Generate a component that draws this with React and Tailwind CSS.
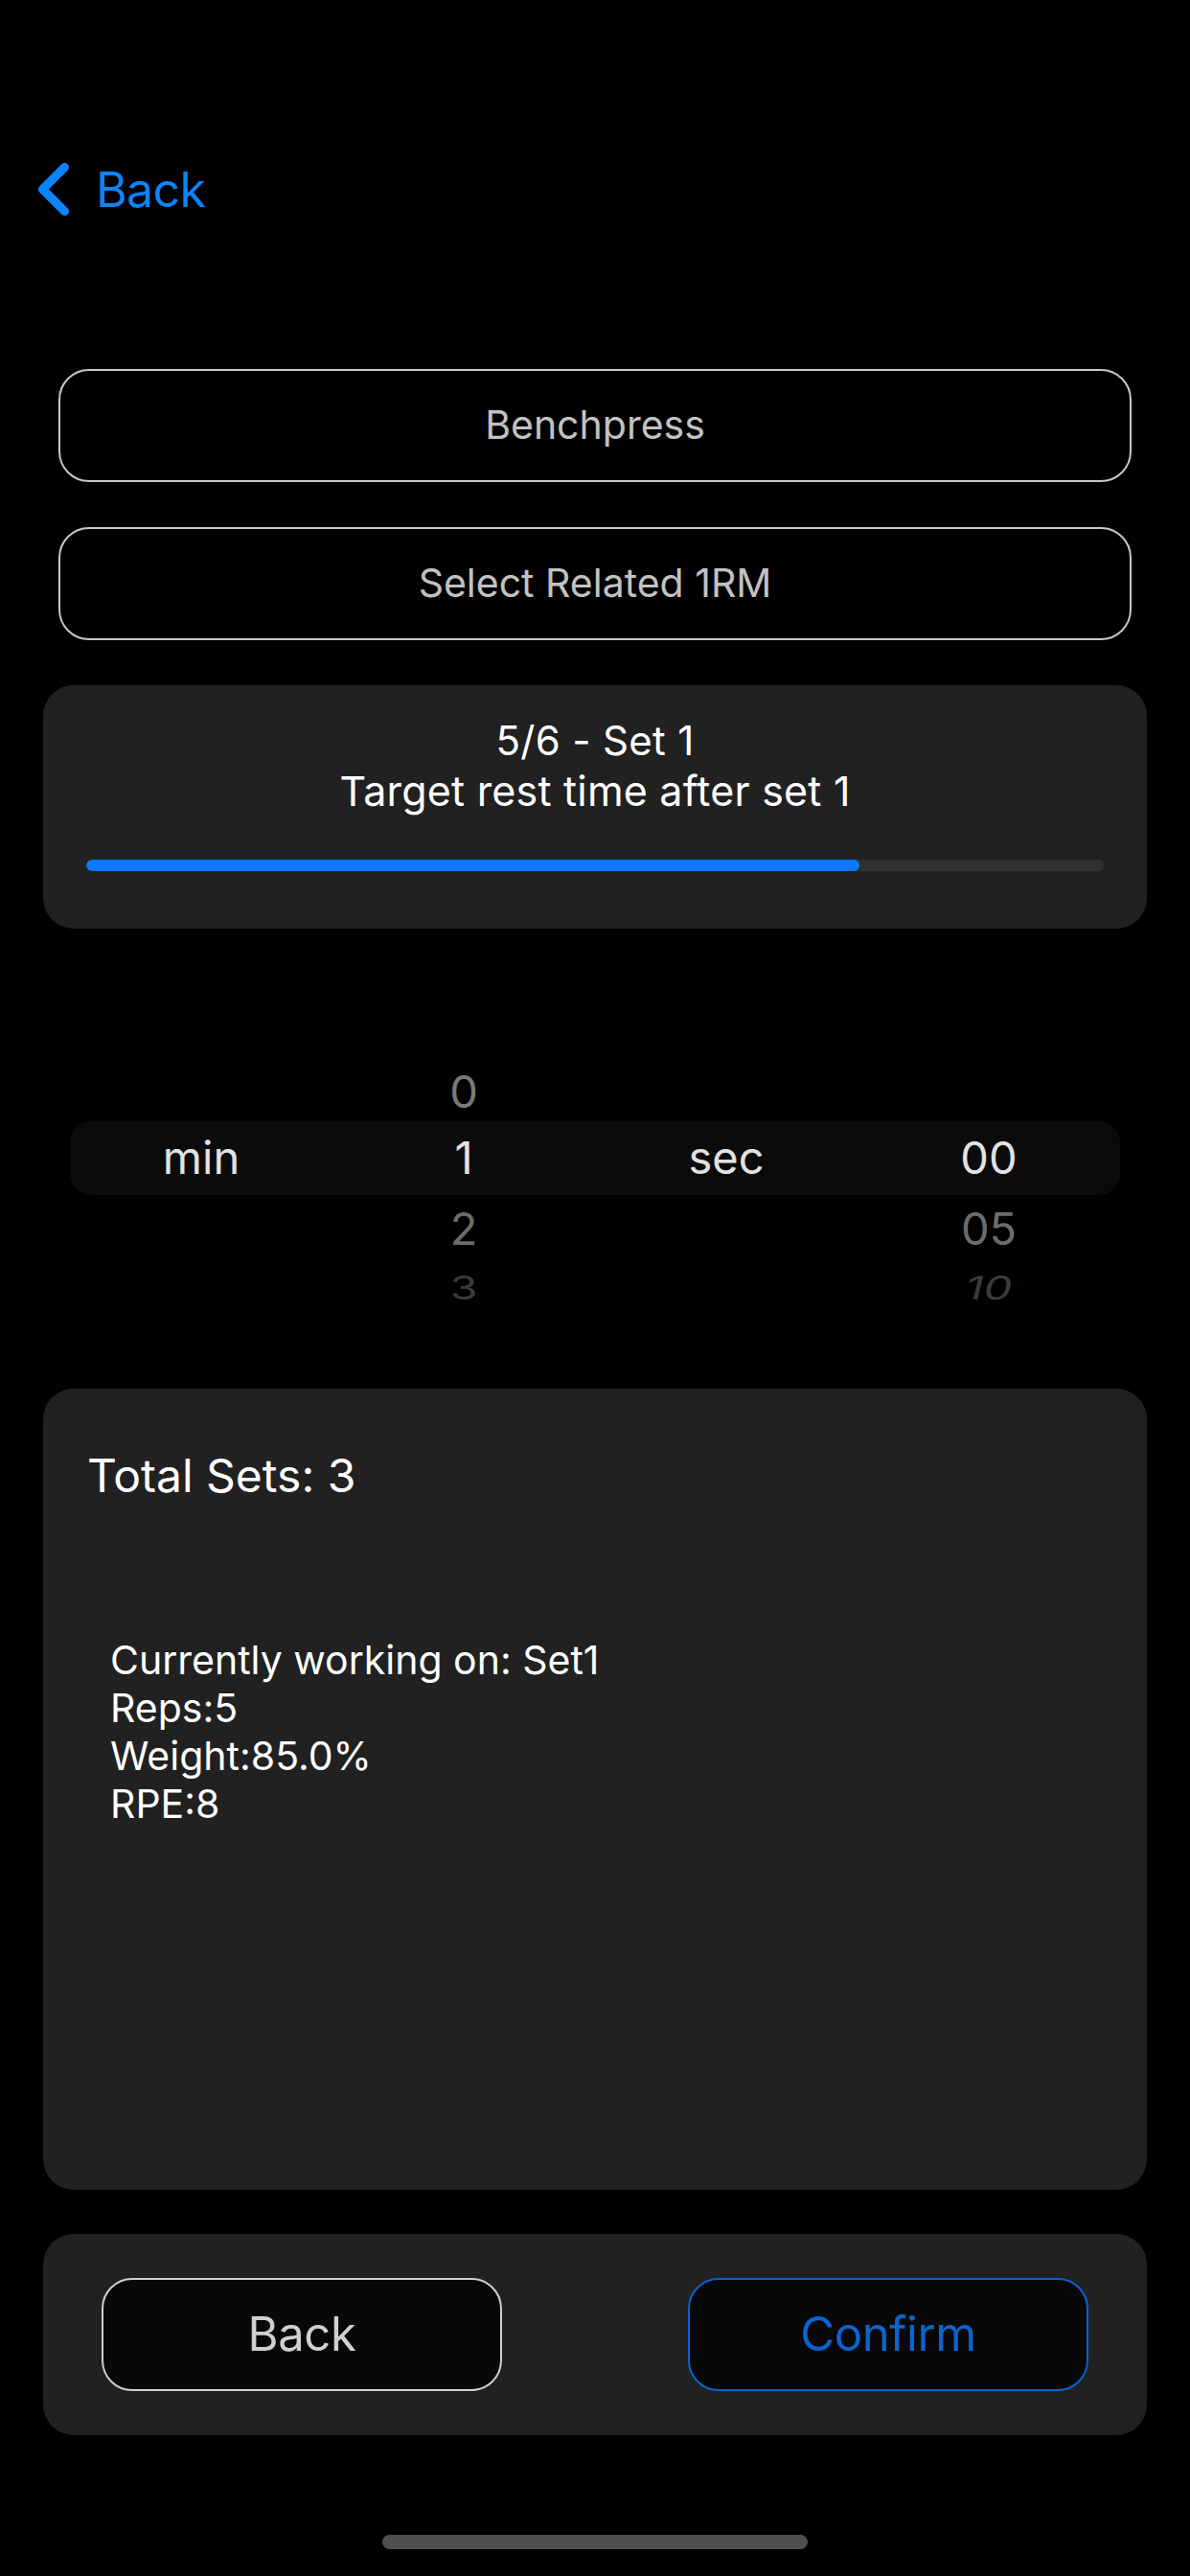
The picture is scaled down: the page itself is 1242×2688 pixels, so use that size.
import React from "react";

function Chevron() {
  return (
    <svg width="40" height="64" viewBox="0 0 40 64" className="shrink-0">
      <polyline
        points="31.5,8.5 8.5,31.5 31.5,54.5"
        fill="none"
        stroke="#0a84ff"
        strokeWidth="9"
        strokeLinecap="round"
        strokeLinejoin="round"
      />
    </svg>
  );
}

function PickerRow({ cells, className = "", textClass = "" }) {
  return (
    <div className={"grid grid-cols-4 " + className}>
      {cells.map((c, i) => (
        <div key={i} className={"flex items-center justify-center " + textClass}>
          {c}
        </div>
      ))}
    </div>
  );
}

export default function App() {
  return (
    <div className="min-h-[2688px] w-[1242px] bg-black font-['Inter',sans-serif] text-white flex flex-col">
      {/* nav */}
      <div className="pt-[166px] pl-[36px] flex items-center h-[230px]">
        <Chevron />
        <span className="ml-[24px] text-[50px] leading-[62px] text-[#0a84ff] tracking-[-0.6px]">Back</span>
      </div>

      {/* select boxes */}
      <div className="mt-[155px] px-[61px] flex flex-col gap-[47px]">
        <div className="h-[118px] rounded-[32px] border-2 border-[#c8c8c8] flex items-center justify-center text-[41px] text-[#c2c2c2]">
          Benchpress
        </div>
        <div className="h-[118px] rounded-[32px] border-2 border-[#c8c8c8] flex items-center justify-center text-[41px] text-[#c2c2c2]">
          Select Related 1RM
        </div>
      </div>

      {/* progress card */}
      <div className="mt-[47px] mx-[45px] rounded-[32px] bg-[#212121] pt-[32px] pb-[60px] px-[45px] flex flex-col items-center">
        <div className="text-[42px] leading-[52px] tracking-[0.3px]">5/6 - Set 1</div>
        <div className="text-[43px] leading-[53px] tracking-[0.2px]">Target rest time after set 1</div>
        <div className="mt-[45px] w-full h-[12px] rounded-full bg-[#303030] overflow-hidden">
          <div className="h-full rounded-full bg-[#0a7aff]" style={{ width: "76%" }} />
        </div>
      </div>

      {/* picker */}
      <div className="mt-[135px] mx-[73px] flex flex-col text-[47px]">
        <PickerRow className="h-[66px]" textClass="text-[#7a7a7a]" cells={["", "0", "", ""]} />
        <PickerRow
          className="h-[77px] rounded-[22px] bg-[#0b0b0b]"
          textClass="text-[#e2e2e2]"
          cells={["min", "1", "sec", "00"]}
        />
        <PickerRow className="h-[62px]" textClass="text-[#6c6c6c]" cells={["", "2", "", "05"]} />
        <PickerRow
          className="h-[44px]"
          textClass="text-[#3c3c3c] scale-y-[0.72]"
          cells={[
            "",
            "3",
            "",
            <span key="t" className="inline-block -skew-x-[10deg]">10</span>,
          ]}
        />
      </div>

      {/* totals card */}
      <div className="mt-[96px] mx-[45px] h-[836px] rounded-[32px] bg-[#212121] pt-[62px] pl-[46px]">
        <div className="text-[48px] leading-[57px]">Total Sets: 3</div>
        <div className="mt-[139px] pl-[24px] text-[41px] leading-[50px]">
          <div>Currently working on: Set1</div>
          <div>Reps:5</div>
          <div>Weight:85.0%</div>
          <div>RPE:8</div>
        </div>
      </div>

      {/* bottom buttons */}
      <div className="mt-[46px] mx-[45px] rounded-[32px] bg-[#212121] py-[46px] px-[61px] flex justify-between">
        <div className="w-[418px] h-[118px] rounded-[32px] border-2 border-[#cfcfcf] bg-[#080808] flex items-center justify-center text-[49px] text-[#d0d0d0] tracking-[-0.4px]">
          Back
        </div>
        <div className="w-[418px] h-[118px] rounded-[32px] border-2 border-[#0a64d0] bg-[#080808] flex items-center justify-center text-[49px] text-[#0a64d0] tracking-[-0.4px]">
          Confirm
        </div>
      </div>

      {/* home indicator */}
      <div className="mt-[104px] flex justify-center">
        <div className="w-[444px] h-[15px] rounded-full bg-[#4f4f4f]" />
      </div>
    </div>
  );
}
